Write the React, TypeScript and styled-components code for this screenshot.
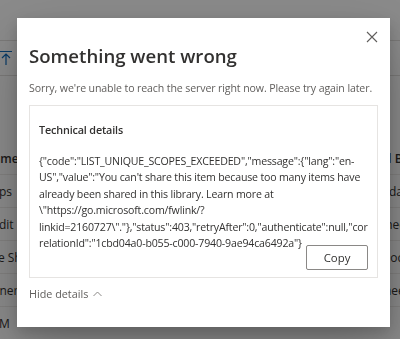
import styled, { createGlobalStyle } from 'styled-components';

const Global = createGlobalStyle`
  html, body {
    margin: 0;
    padding: 0;
    background: #ffffff;
    font-family: 'Open Sans', 'Liberation Sans', sans-serif;
    overflow: hidden;
  }
`

const Page = styled.div`
  width: 400px;
  height: 339px;
  overflow: hidden;
  background: #ffffff;
  color: #323130;
  display: flex;
  flex-direction: column;
`
const TopBar = styled.div`
  height: 40px;
  border-bottom: 1px solid #e1dfdd;
  flex-shrink: 0;
`
const CommandBar = styled.div`
  height: 34px;
  border-bottom: 1px solid #e1dfdd;
  display: flex;
  align-items: center;
  flex-shrink: 0;
`
const Spacer = styled.div`
  height: 66px;
  flex-shrink: 0;
`
const Row = styled.div<{ $header?: boolean }>`
  height: 32px;
  flex-shrink: 0;
  border-bottom: 1px solid #edebe9;
  display: flex;
  justify-content: space-between;
  align-items: center;
  font-size: 12px;
  font-weight: ${p => (p.$header ? 600 : 400)};
  white-space: nowrap;
  overflow: hidden;
`
const NameCell = styled.span`
  margin-left: -16px;
`
const SideCell = styled.span`
  margin-right: -9px;
`

const Overlay = styled.div`
  position: fixed;
  inset: 0;
  background: rgba(0, 0, 0, 0.46);
`
const Dialog = styled.div`
  position: fixed;
  left: 17px;
  top: 18px;
  width: 373px;
  height: 309px;
  box-sizing: border-box;
  background: #ffffff;
  box-shadow: 0 25px 58px rgba(0, 0, 0, 0.22), 0 5px 14px rgba(0, 0, 0, 0.18);
  padding: 25px 12px 0 12px;
  display: flex;
  flex-direction: column;
`
const CloseButton = styled.button`
  position: absolute;
  top: 12px;
  right: 11px;
  width: 14px;
  height: 14px;
  padding: 0;
  border: none;
  background: none;
  display: flex;
  align-items: center;
  justify-content: center;
`
const Title = styled.h1`
  margin: 0;
  font-size: 18.6px;
  line-height: 26px;
  font-weight: 600;
  color: #323130;
`
const Subtitle = styled.p`
  margin: 9px 0 0;
  font-size: 10.6px;
  letter-spacing: -0.12px;
  line-height: 20px;
  color: #605e5c;
  white-space: nowrap;
`
const Details = styled.div`
  margin-top: 7px;
  height: 173px;
  box-sizing: border-box;
  border: 1px solid #e6e4e2;
  padding: 14px 9px 0;
  display: flex;
  flex-direction: column;
`
const DetailsTitle = styled.div`
  font-size: 10.8px;
  letter-spacing: -0.15px;
  line-height: 20px;
  font-weight: 600;
  color: #323130;
`
const Code = styled.div`
  margin-top: 13px;
  font-size: 10.6px;
  letter-spacing: -0.18px;
  line-height: 16.4px;
  color: #323130;
`
const CodeLine = styled.span`
  display: block;
  white-space: nowrap;
`
const Actions = styled.div`
  display: flex;
  justify-content: flex-end;
  margin-top: -6px;
`
const CopyButton = styled.button`
  width: 62px;
  height: 25px;
  box-sizing: border-box;
  border: 1px solid #8a8886;
  border-radius: 2px;
  background: #ffffff;
  font-family: inherit;
  font-size: 11.4px;
  font-weight: 400;
  color: #323130;
  padding: 0;
`
const Toggle = styled.div`
  margin-top: 6px;
  display: flex;
  align-items: center;
  gap: 5px;
  font-size: 10.8px;
  line-height: 20px;
  color: #605e5c;
`

const codeLines = [
  '{"code":"LIST_UNIQUE_SCOPES_EXCEEDED","message":{"lang":"en-',
  'US","value":"You can\'t share this item because too many items have',
  'already been shared in this library. Learn more at',
  '\\"https://go.microsoft.com/fwlink/?',
  'linkid=2160727\\"."},"status":403,"retryAfter":0,"authenticate":null,"cor',
  'relationId":"1cbd04a0-b055-c000-7940-9ae94ca6492a"}',
]

const rows = [
  ['Apps', 'Today'],
  ['Audit log', 'Wheel'],
  ['Site Sharing', 'Docs'],
  ['General', 'Sheet'],
  ['CRM', ''],
]

const App = () => {
  return (
    <>
      <Global />
      <Page>
        <TopBar />
        <CommandBar>
          <svg width="14" height="16" viewBox="0 0 14 16" style={{ marginLeft: -1 }}>
            <path d="M1 1.5h12M7 4v11M3 8l4-4 4 4" fill="none" stroke="#0f6cbd" strokeWidth="1.2" />
          </svg>
        </CommandBar>
        <Spacer />
        <Row $header>
          <NameCell>Name</NameCell>
          <SideCell>Modified By</SideCell>
        </Row>
        {rows.map(([name, side]) => (
          <Row key={name}>
            <NameCell>{name}</NameCell>
            <SideCell>{side}</SideCell>
          </Row>
        ))}
      </Page>
      <Overlay />
      <Dialog role="dialog">
        <CloseButton aria-label="Close">
          <svg width="12" height="12" viewBox="0 0 12 12">
            <path d="M1 1l10 10M11 1L1 11" stroke="#605e5c" strokeWidth="1.1" fill="none" />
          </svg>
        </CloseButton>
        <Title>Something went wrong</Title>
        <Subtitle>Sorry, we're unable to reach the server right now. Please try again later.</Subtitle>
        <Details>
          <DetailsTitle>Technical details</DetailsTitle>
          <Code>
            {codeLines.map(line => (
              <CodeLine key={line}>{line}</CodeLine>
            ))}
          </Code>
          <Actions>
            <CopyButton>Copy</CopyButton>
          </Actions>
        </Details>
        <Toggle>
          Hide details
          <svg width="9" height="6" viewBox="0 0 9 6">
            <path d="M0.5 5L4.5 1l4 4" stroke="#8a8886" strokeWidth="1" fill="none" />
          </svg>
        </Toggle>
      </Dialog>
    </>
  )
}

export default App
